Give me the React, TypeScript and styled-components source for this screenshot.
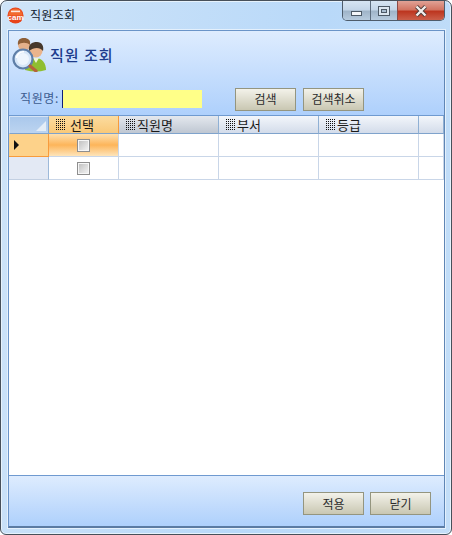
import { createGlobalStyle } from 'styled-components';
import styled from 'styled-components';

const GlobalStyle = createGlobalStyle`
  html, body {
    margin: 0;
    padding: 0;
    background: #fff;
  }
  * {
    box-sizing: border-box;
  }
`;

const FONT = `"Noto Sans CJK KR", "Noto Sans", sans-serif`;

const Window = styled.div`
  width: 452px;
  height: 535px;
  display: flex;
  flex-direction: column;
  border: 1px solid #47505a;
  border-radius: 7px 7px 6px 6px;
  background: linear-gradient(100deg, #cfe4f8 0%, #b9d9f9 60%, #c3def8 100%);
  box-shadow: inset 0 0 0 1px #e6f2fc;
  font-family: ${FONT};
  overflow: hidden;
`;

const TitleBar = styled.div`
  height: 28px;
  flex: none;
  display: flex;
  align-items: flex-start;
  padding-left: 6px;
`;

const AppTitle = styled.span`
  margin: 5px 0 0 6px;
  font-size: 12px;
  line-height: 18px;
  letter-spacing: 0.3px;
  color: #10202e;
`;

const Controls = styled.div`
  margin-left: auto;
  margin-right: 6px;
  display: flex;
  height: 20px;
  border: 1px solid #4e5c6b;
  border-top: none;
  border-radius: 0 0 5px 5px;
  overflow: hidden;
`;

const ControlButton = styled.div<{ $close?: boolean; $width: number }>`
  width: ${(p) => p.$width}px;
  display: flex;
  align-items: center;
  justify-content: center;
  border-left: 1px solid ${(p) => (p.$close ? '#8c4a46' : '#5d6d7e')};
  background: ${(p) =>
    p.$close
      ? 'linear-gradient(#e0a296 0%, #d27563 45%, #bd3620 55%, #cb5f4a 100%)'
      : 'linear-gradient(#d6e5f3 0%, #c4d6e8 45%, #a0b5c9 55%, #b7cbde 100%)'};

  &:first-child {
    border-left: none;
  }
`;

const Client = styled.div`
  flex: 1;
  margin: 1px 6px 6px 7px;
  display: flex;
  flex-direction: column;
  border: 1px solid #6a94c8;
  border-bottom: 2px solid #5b7ba3;
  border-right: 1px solid #5f86b5;
  box-shadow: 0 0 0 1px #e4f0fc;
  min-height: 0;
`;

const SearchPanel = styled.div`
  height: 85px;
  flex: none;
  display: flex;
  flex-direction: column;
  padding: 6px 0 0 3px;
  background: linear-gradient(#deecfe 0%, #aed0fc 100%);
  border-bottom: 1px solid #6f9ad0;
`;

const Heading = styled.div`
  display: flex;
  align-items: center;
  gap: 4px;
  height: 35px;
`;

const HeadingText = styled.h1`
  margin: 0;
  font-size: 15px;
  font-weight: 500;
  letter-spacing: 1px;
  color: #1d3c8c;
`;

const SearchRow = styled.div`
  display: flex;
  align-items: center;
  margin-top: 15px;
  padding-left: 8px;
  height: 24px;
`;

const FieldLabel = styled.label`
  width: 42px;
  font-size: 12px;
  line-height: 16px;
  margin-top: -2px;
  letter-spacing: 0.6px;
  color: #3c5c90;
  white-space: nowrap;
`;

const NameInput = styled.div`
  width: 140px;
  height: 18px;
  background: #ffff88;
  border-left: 1px solid #10207a;
`;

const ActionButton = styled.button<{ $gap?: number }>`
  width: 61px;
  height: 23px;
  padding: 0;
  margin-left: ${(p) => p.$gap ?? 0}px;
  font-family: ${FONT};
  font-size: 12px;
  line-height: 1;
  color: #2b2b2b;
  border: 1px solid #94957f;
  border-radius: 0;
  background: linear-gradient(#f3f2ea 0%, #c9c7b2 100%);
`;

const Table = styled.div`
  flex: 1;
  background: #fff;
  min-height: 0;
`;

const Row = styled.div<{ $height: number }>`
  display: grid;
  grid-template-columns: 40px 70px 100px 100px 100px 1fr;
  height: ${(p) => p.$height}px;
`;

const Corner = styled.div`
  position: relative;
  background: linear-gradient(#aac8ec, #bcd4f0);
  border: 1px solid #d6e4f5;
  border-right-color: #7fa3cc;
  border-bottom: 1px solid #7fa3cc;

  &::after {
    content: '';
    position: absolute;
    right: 2px;
    bottom: 2px;
    border-style: solid;
    border-width: 0 0 10px 10px;
    border-color: transparent transparent #e4edf7 transparent;
  }
`;

const HeaderCell = styled.div<{ $variant?: 'active' | 'pressed' }>`
  display: flex;
  align-items: center;
  padding-left: 6px;
  font-size: 13px;
  line-height: 16px;
  color: #1a1a1a;
  border-right: 1px solid ${(p) => (p.$variant === 'active' ? '#f79b3c' : '#8fb0d4')};
  border-bottom: 1px solid #7fa3cc;
  background: ${(p) =>
    p.$variant === 'active'
      ? 'linear-gradient(#fbdca0, #f9c878)'
      : p.$variant === 'pressed'
        ? 'linear-gradient(#e4e8ee, #bfc7d2)'
        : 'linear-gradient(#f3f6fb, #d3dcea)'};
`;

const Grip = styled.i<{ $gap: number }>`
  width: 11px;
  height: 11px;
  flex: none;
  margin-right: ${(p) => p.$gap}px;
  background: conic-gradient(#111 25%, transparent 0) 0 0 / 2px 2px;
`;

const RowHeader = styled.div<{ $current?: boolean }>`
  display: flex;
  align-items: center;
  padding-left: 5px;
  background: ${(p) => (p.$current ? '#fdd28a' : '#e3e9f4')};
  border-right: 1px solid ${(p) => (p.$current ? '#f79b3c' : '#9db9d9')};
  border-bottom: 1px solid ${(p) => (p.$current ? '#f79b3c' : '#c3d0e2')};
`;

const Arrow = styled.span`
  width: 0;
  height: 0;
  border-style: solid;
  border-width: 5px 0 5px 5px;
  border-color: transparent transparent transparent #111;
`;

const Cell = styled.div<{ $selected?: boolean }>`
  display: flex;
  align-items: center;
  justify-content: center;
  border-right: 1px solid #c9d6e8;
  border-bottom: 1px solid #c9d6e8;
  background: ${(p) =>
    p.$selected
      ? 'linear-gradient(#fee0ae 0%, #fdb55a 50%, #fee5bb 100%)'
      : '#fff'};
`;

const CheckBox = styled.span`
  width: 13px;
  height: 13px;
  border: 1px solid #8e8e8e;
  background: linear-gradient(135deg, #bdbdbd, #f6f6f6);
  box-shadow: inset 0 0 0 1px #f6f6f6;
`;

const Footer = styled.div`
  height: 51px;
  flex: none;
  display: flex;
  justify-content: flex-end;
  gap: 6px;
  padding: 16px 13px 0 0;
  background: linear-gradient(#deecfe 0%, #aed0fc 100%);
  border-top: 1px solid #6f9ad0;
`;

function CamLogo() {
  return (
    <svg width="17" height="17" viewBox="0 0 17 17" style={{ marginTop: 6 }}>
      <circle cx="8.5" cy="8.5" r="8" fill="#e8431a" />
      <path d="M1.5 8.5 A7 7 0 0 1 15.5 8.5 Z" fill="#f26a2e" />
      <rect x="4" y="3.6" width="9" height="1.6" fill="#fff" opacity="0.85" />
      <text x="8.5" y="12.5" fontSize="8" fontWeight="700" textAnchor="middle" fill="#fff" fontFamily="Liberation Sans, sans-serif">
        cam
      </text>
    </svg>
  );
}

function PeopleIcon() {
  return (
    <svg width="34" height="35" viewBox="0 0 34 35">
      <path d="M3 22 C4 16 8 14 12 14 C17 14 20 17 21 22 Z" fill="#d3a27e" />
      <circle cx="12" cy="8" r="6" fill="#e4b08a" />
      <path d="M6 8 C5 2 9 1 12 1 C16 1 19 3 18 8 C15 5 9 5 6 8 Z" fill="#8e5f38" />
      <path d="M13 33 C13 25 18 21 24 21 C30 21 34 26 34 33 Q24 36 13 33 Z" fill="#8fbe30" />
      <path d="M21 21 L24 26 L27 21 Z" fill="#f0f6d8" />
      <circle cx="24" cy="14" r="6.5" fill="#eab48c" />
      <path d="M17 14 C16 7 20 5 25 5 C30 5 32 9 31 14 C28 10 22 10 17 14 Z" fill="#46382c" />
      <circle cx="11" cy="22" r="9.5" fill="#d6e6f8" stroke="#5f7fa8" strokeWidth="2.2" />
      <circle cx="11" cy="22" r="6" fill="#eef5fd" />
      <path d="M4.5 21 A7 7 0 0 1 12 14.8" fill="none" stroke="#fff" strokeWidth="1.6" />
      <path d="M18 29 L24 34" stroke="#b5633a" strokeWidth="3.2" strokeLinecap="round" />
    </svg>
  );
}

export default function App() {
  return (
    <>
      <GlobalStyle />
      <Window>
        <TitleBar>
          <CamLogo />
          <AppTitle>직원조회</AppTitle>
          <Controls>
            <ControlButton $width={27}>
              <svg width="12" height="10" viewBox="0 0 12 10">
                <rect x="0.5" y="5.5" width="10" height="4" fill="#f4f7fa" stroke="#4c5966" />
              </svg>
            </ControlButton>
            <ControlButton $width={27}>
              <svg width="12" height="10" viewBox="0 0 12 10">
                <rect x="0.5" y="0.5" width="11" height="9" fill="#dbe6f0" stroke="#4c5966" />
                <rect x="3.5" y="3.5" width="5" height="3" fill="#a9bdd0" stroke="#4c5966" />
              </svg>
            </ControlButton>
            <ControlButton $close $width={47}>
              <svg width="14" height="12" viewBox="0 0 14 12">
                <path d="M2.5 1.5 L11.5 10.5 M11.5 1.5 L2.5 10.5" stroke="#4a3a38" strokeWidth="4" />
                <path d="M2.5 1.5 L11.5 10.5 M11.5 1.5 L2.5 10.5" stroke="#f3eeec" strokeWidth="2.4" />
              </svg>
            </ControlButton>
          </Controls>
        </TitleBar>
        <Client>
          <SearchPanel>
            <Heading>
              <PeopleIcon />
              <HeadingText>직원 조회</HeadingText>
            </Heading>
            <SearchRow>
              <FieldLabel>직원명:</FieldLabel>
              <NameInput />
              <ActionButton $gap={33}>검색</ActionButton>
              <ActionButton $gap={7}>검색취소</ActionButton>
            </SearchRow>
          </SearchPanel>
          <Table>
            <Row $height={18}>
              <Corner />
              <HeaderCell $variant="active">
                <Grip $gap={4} />
                선택
              </HeaderCell>
              <HeaderCell $variant="pressed">
                <Grip $gap={1} />
                직원명
              </HeaderCell>
              <HeaderCell>
                <Grip $gap={1} />
                부서
              </HeaderCell>
              <HeaderCell>
                <Grip $gap={1} />
                등급
              </HeaderCell>
              <HeaderCell />
            </Row>
            <Row $height={23}>
              <RowHeader $current>
                <Arrow />
              </RowHeader>
              <Cell $selected>
                <CheckBox />
              </Cell>
              <Cell />
              <Cell />
              <Cell />
              <Cell />
            </Row>
            <Row $height={23}>
              <RowHeader />
              <Cell>
                <CheckBox />
              </Cell>
              <Cell />
              <Cell />
              <Cell />
              <Cell />
            </Row>
          </Table>
          <Footer>
            <ActionButton>적용</ActionButton>
            <ActionButton>닫기</ActionButton>
          </Footer>
        </Client>
      </Window>
    </>
  );
}
